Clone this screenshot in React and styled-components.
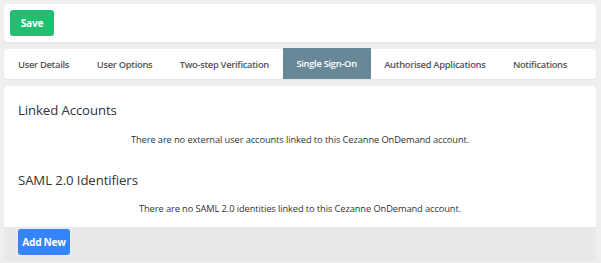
import React from "react";
import styled, { createGlobalStyle } from "styled-components";

const Global = createGlobalStyle`
  html, body { margin: 0; padding: 0; background: #efefef; }
  body { font-family: "Open Sans", "Liberation Sans", sans-serif; color: #333; }
`;

const Page = styled.div`
  display: flex;
  flex-direction: column;
  gap: 7px;
  padding: 4px 5px 0 4px;
  width: 592px;
`;

const Card = styled.div`
  background: #fff;
  border-radius: 4px;
  box-shadow: 0 1px 2px rgba(0, 0, 0, 0.06);
`;

const Toolbar = styled(Card)`
  display: flex;
  align-items: center;
  padding: 6px;
  height: 26px;
`;

const Button = styled.button`
  border: none;
  border-radius: 3px;
  height: 26px;
  width: ${(p) => p.$w}px;
  padding: 0;
  font-family: "Open Sans", "Liberation Sans", sans-serif;
  font-size: 10.2px;
  font-weight: 700;
  color: #fff;
  background: ${(p) => p.$color};
  letter-spacing: -0.3px;
  white-space: nowrap;
`;

const Tabs = styled(Card)`
  display: flex;
  height: 30px;
`;

const Tab = styled.div`
  display: flex;
  align-items: center;
  flex-shrink: 0;
  white-space: nowrap;
  padding: 0 ${(p) => p.$pad}px;
  font-size: 9.4px;
  font-weight: 600;
  letter-spacing: -0.3px;
  color: ${(p) => (p.$active ? "#fff" : "#555")};
  background: ${(p) => (p.$active ? "#688898" : "transparent")};
  margin-top: ${(p) => (p.$active ? "-1px" : "0")};
  height: ${(p) => (p.$active ? "31px" : "30px")};
`;

const Panel = styled.div`
  display: flex;
  flex-direction: column;
  background: #e9e9e9;
`;

const Content = styled.div`
  background: #fff;
  border-radius: 4px 4px 0 0;
`;

const Section = styled.div`
  padding: ${(p) => p.$pt}px 14px ${(p) => p.$pb}px;
`;

const Heading = styled.div`
  font-size: 13.2px;
  line-height: 22px;
  color: #333;
  letter-spacing: -0.1px;
`;

const Note = styled.div`
  margin-top: ${(p) => p.$mt}px;
  text-align: center;
  font-size: 9.3px;
  line-height: 14px;
  color: #333;
  letter-spacing: -0.1px;
`;

const Footer = styled.div`
  display: flex;
  padding: 2px 14px 6px;
`;

const tabs = [
  ["User Details", 14],
  ["User Options", 13.7],
  ["Two-step Verification", 13.7],
  ["Single Sign-On", 13.7, true],
  ["Authorised Applications", 13.7],
  ["Notifications", 13.7],
];

export default function App() {
  return (
    <>
      <Global />
      <Page>
        <Toolbar>
          <Button $color="#22bf70" $w={44}>Save</Button>
        </Toolbar>
        <Tabs>
          {tabs.map(([label, pad, active]) => (
            <Tab key={label} $pad={pad} $active={active}>
              {label}
            </Tab>
          ))}
        </Tabs>
        <Panel>
          <Content>
            <Section $pt={13} $pb={10}>
              <Heading>Linked Accounts</Heading>
              <Note $mt={12}>There are no external user accounts linked to this Cezanne OnDemand account.</Note>
            </Section>
            <Section $pt={12} $pb={11}>
              <Heading>SAML 2.0 Identifiers</Heading>
              <Note $mt={11}>There are no SAML 2.0 identities linked to this Cezanne OnDemand account.</Note>
            </Section>
          </Content>
          <Footer>
            <Button $color="#3484fa" $w={52}>Add New</Button>
          </Footer>
        </Panel>
      </Page>
    </>
  );
}
